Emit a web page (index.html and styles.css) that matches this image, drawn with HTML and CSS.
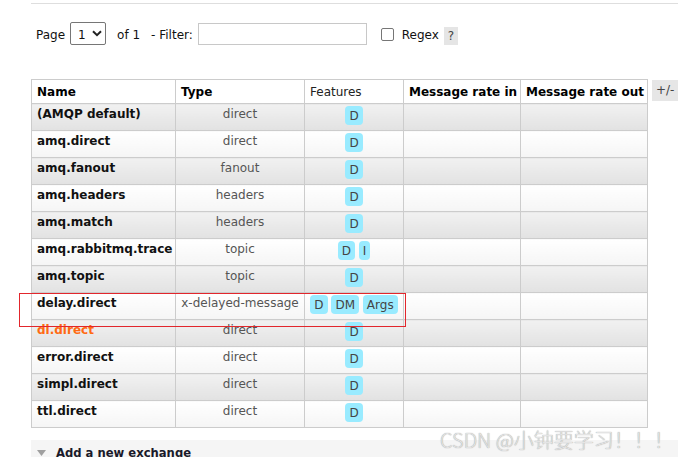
FILE: index.html
```html
<!DOCTYPE html>
<html>
<head>
<meta charset="utf-8">
<link rel="stylesheet" href="styles.css">
</head>
<body>
<div class="page">
  <div class="rule"></div>
  <div class="filter">
    <span class="lbl">Page</span>
    <span class="select"><span class="sel-val">1</span><svg class="chev" width="10" height="7" viewBox="0 0 10 7"><path d="M1 1.2 L5 5.2 L9 1.2" fill="none" stroke="#222" stroke-width="2"/></svg></span>
    <span class="lbl of">of 1</span>
    <span class="lbl flabel">- Filter:</span>
    <span class="input"></span>
    <span class="checkbox"></span>
    <span class="lbl regex">Regex</span>
    <span class="help">?</span>
  </div>
  <div class="list-area">
    <table class="list">
      <colgroup>
        <col class="c-name"><col class="c-type"><col class="c-feat"><col class="c-in"><col class="c-out">
      </colgroup>
      <thead>
        <tr><th>Name</th><th>Type</th><th class="plain">Features</th><th>Message rate in</th><th>Message rate out</th></tr>
      </thead>
      <tbody>
        <tr class="alt1"><td class="name">(AMQP default)</td><td class="type">direct</td><td class="feat"><span class="badge">D</span></td><td></td><td></td></tr>
        <tr class="alt2"><td class="name">amq.direct</td><td class="type">direct</td><td class="feat"><span class="badge">D</span></td><td></td><td></td></tr>
        <tr class="alt1"><td class="name">amq.fanout</td><td class="type">fanout</td><td class="feat"><span class="badge">D</span></td><td></td><td></td></tr>
        <tr class="alt2"><td class="name">amq.headers</td><td class="type">headers</td><td class="feat"><span class="badge">D</span></td><td></td><td></td></tr>
        <tr class="alt1"><td class="name">amq.match</td><td class="type">headers</td><td class="feat"><span class="badge">D</span></td><td></td><td></td></tr>
        <tr class="alt2"><td class="name">amq.rabbitmq.trace</td><td class="type">topic</td><td class="feat"><span class="badge">D</span> <span class="badge">I</span></td><td></td><td></td></tr>
        <tr class="alt1"><td class="name">amq.topic</td><td class="type">topic</td><td class="feat"><span class="badge">D</span></td><td></td><td></td></tr>
        <tr class="alt2"><td class="name">delay.direct</td><td class="type">x-delayed-message</td><td class="feat"><span class="badge">D</span> <span class="badge">DM</span> <span class="badge">Args</span></td><td></td><td></td></tr>
        <tr class="alt1"><td class="name hover">dl.direct</td><td class="type">direct</td><td class="feat"><span class="badge">D</span></td><td></td><td></td></tr>
        <tr class="alt2"><td class="name">error.direct</td><td class="type">direct</td><td class="feat"><span class="badge">D</span></td><td></td><td></td></tr>
        <tr class="alt1"><td class="name">simpl.direct</td><td class="type">direct</td><td class="feat"><span class="badge">D</span></td><td></td><td></td></tr>
        <tr class="alt2"><td class="name">ttl.direct</td><td class="type">direct</td><td class="feat"><span class="badge">D</span></td><td></td><td></td></tr>
      </tbody>
    </table>
    <span class="toggle">+/-</span>
  </div>
  <div class="section">
    <svg class="tri" width="9" height="6" viewBox="0 0 9 6"><path d="M0 0 H9 L4.5 6 Z" fill="#a0a0a0"/></svg>
    <span class="stitle">Add a new exchange</span>
  </div>
  <div class="highlight"></div>
  <div class="watermark">CSDN @小钟要学习！！！</div>
</div>
</body>
</html>
```
FILE: styles.css
```css
html, body {
  margin: 0;
  padding: 0;
  background: #fff;
  overflow: hidden;
}
body {
  font-family: "DejaVu Sans", Verdana, sans-serif;
  font-size: 12px;
  color: #111;
}
.page {
  position: relative;
  padding-left: 31px;
  height: 457px;
}
.rule {
  margin-top: 3px;
  border-top: 1px solid #dedede;
}
.filter {
  display: flex;
  align-items: center;
  margin-top: 18px;
  height: 23px;
  padding-left: 5px;
}
.lbl {
  line-height: 14px;
  color: #111;
  margin-top: 2px;
}
.select {
  margin-left: 5px;
  box-sizing: border-box;
  width: 36px;
  height: 23px;
  border: 1px solid #767676;
  border-radius: 2px;
  display: flex;
  align-items: center;
  padding-left: 7px;
}
.sel-val {
  color: #111;
  margin-top: 2px;
}
.chev {
  margin-left: auto;
  margin-right: 3px;
}
.of {
  margin-left: 11px;
}
.flabel {
  margin-left: 11px;
}
.input {
  margin-left: 5px;
  box-sizing: border-box;
  width: 169px;
  height: 22px;
  border: 1px solid #c8c8c8;
  background: #fff;
}
.checkbox {
  margin-left: 14px;
  box-sizing: border-box;
  width: 13px;
  height: 13px;
  border: 1px solid #767676;
  border-radius: 2px;
  margin-top: 1px;
}
.regex {
  margin-left: 8px;
  margin-top: 3px;
}
.help {
  margin-left: 5px;
  margin-top: 4px;
  width: 14px;
  height: 18px;
  line-height: 18px;
  text-align: center;
  background: #e5e5e5;
  color: #444;
}
.list-area {
  display: flex;
  align-items: flex-start;
  margin-top: 34px;
}
.list {
  border-collapse: collapse;
  table-layout: fixed;
  width: 617px;
}
.c-name { width: 144px; }
.c-type { width: 129px; }
.c-feat { width: 99px; }
.c-in { width: 117px; }
.c-out { width: 127px; }
.list th, .list td {
  border: 1px solid #cccccc;
  text-align: left;
  vertical-align: top;
  white-space: nowrap;
  overflow: hidden;
}
.list th {
  font-weight: bold;
  color: #000;
  background: #fff;
  padding: 5px 5px 4px;
  line-height: 14px;
  height: 14px;
}
.list th.plain {
  font-weight: normal;
  color: #222;
}
.list td {
  padding: 3px 5px 2px;
  height: 21px;
  line-height: 14px;
}
.list td.feat {
  text-align: center;
  padding-top: 2px;
  padding-bottom: 3px;
}
.list tr.alt1 td {
  background: linear-gradient(#f1f1f1, #e2e2e2);
}
.list tr.alt2 td {
  background: linear-gradient(#ffffff, #f5f5f5);
}
.list td.name {
  font-weight: bold;
  color: #111;
}
.list td.hover {
  color: #ff6a13;
}
.list td.type {
  text-align: center;
  color: #555;
}
.badge {
  display: inline-block;
  vertical-align: top;
  background: #99ebff;
  color: #444;
  border-radius: 4px;
  padding: 0 4px;
  height: 19px;
  line-height: 20px;
}
.toggle {
  margin-left: 4px;
  margin-top: 1px;
  height: 21px;
  line-height: 21px;
  padding: 0 4px;
  background: #e6e6e6;
  color: #444;
  white-space: nowrap;
}
.section {
  margin-top: 12px;
  background: #f5f5f5;
  display: flex;
  align-items: flex-start;
  padding-top: 6px;
  height: 21px;
}
.tri {
  margin-left: 6px;
  margin-top: 4px;
  margin-right: 10px;
}
.stitle {
  font-weight: bold;
  font-size: 11.6px;
  line-height: 14px;
  color: #1a1a2a;
}
.highlight {
  position: absolute;
  left: 19px;
  top: 290px;
  width: 387px;
  height: 34px;
  box-sizing: border-box;
  border: 1px solid #e2262c;
}
.watermark {
  position: absolute;
  left: 440px;
  top: 425px;
  font-family: "Noto Sans CJK SC", "DejaVu Sans", sans-serif;
  font-weight: 300;
  font-size: 20px;
  line-height: 24px;
  color: #e4e4e4;
  text-shadow: 0 0 1px #888;
  white-space: nowrap;
}
```
